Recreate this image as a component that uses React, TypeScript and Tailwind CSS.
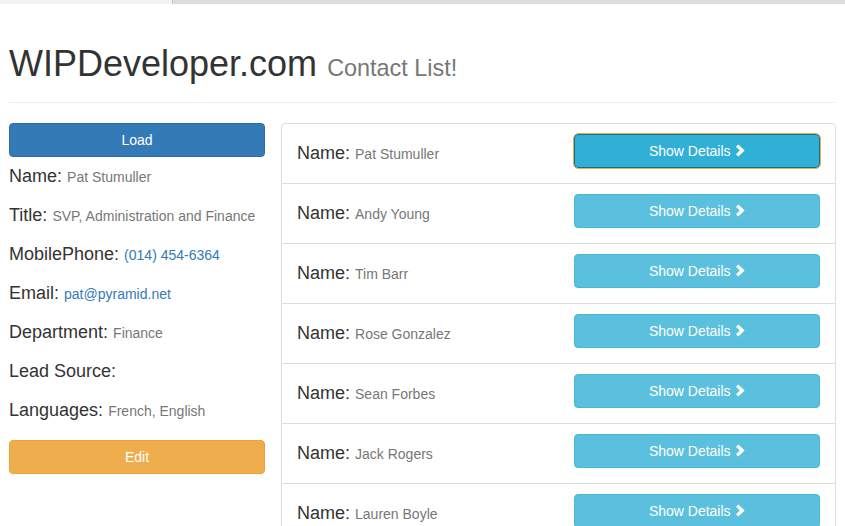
import React from "react";

const contacts = [
  "Pat Stumuller",
  "Andy Young",
  "Tim Barr",
  "Rose Gonzalez",
  "Sean Forbes",
  "Jack Rogers",
  "Lauren Boyle",
];

function Chevron() {
  return (
    <svg width="10" height="13" viewBox="0 0 10 13" className="inline-block ml-[4px] -mt-[3px] align-middle">
      <polyline points="2.2,1.6 7.2,6.5 2.2,11.4" fill="none" stroke="white" strokeWidth="3.4" strokeLinejoin="miter" strokeLinecap="butt" />
    </svg>
  );
}

function Field({ label, value, link }: { label: string; value?: string; link?: boolean }) {
  return (
    <div className="h-[39px] pt-[9px] leading-[20px] text-[18px] text-[#333]">
      {label}:{" "}
      {value && (
        <span className={"text-[14px] " + (link ? "text-[#337ab7]" : "text-[#777]")}>{value}</span>
      )}
    </div>
  );
}

export default function App() {
  return (
    <div className="min-h-[526px] bg-white text-[#333]" style={{ fontFamily: '"Liberation Sans", Arial, Helvetica, sans-serif' }}>
      <div className="flex h-[4px]">
        <div className="w-[173px] bg-[#f2f2f2] border-r border-[#c8c8c8]"></div>
        <div className="flex-1 bg-[#dcdcdc]"></div>
      </div>
      <div className="px-[9px]">
        <div className="mt-[40px] pb-[18px] border-b border-[#eeeeee]">
          <h1 className="h-[40px] text-[36px] leading-[40px] font-normal text-[#333] whitespace-nowrap">
            WIPDeveloper.com <small className="text-[23.4px] leading-none text-[#777]">Contact List!</small>
          </h1>
        </div>
        <div className="mt-[20px] flex gap-[16px]">
          <div className="w-[256px] shrink-0">
            <button className="w-full h-[34px] rounded-[4px] bg-[#337ab7] border border-[#2e6da4] text-white text-[14px] leading-[20px]">
              Load
            </button>
            <Field label="Name" value="Pat Stumuller" />
            <Field label="Title" value="SVP, Administration and Finance" />
            <Field label="MobilePhone" value="(014) 454-6364" link />
            <Field label="Email" value="pat@pyramid.net" link />
            <Field label="Department" value="Finance" />
            <Field label="Lead Source" />
            <Field label="Languages" value="French, English" />
            <button className="mt-[10px] w-full h-[34px] rounded-[4px] bg-[#f0ad4e] border border-[#eea236] text-white text-[14px] leading-[20px]">
              Edit
            </button>
          </div>
          <div className="flex-1 border border-[#dddddd] rounded-t-[4px] h-fit">
            {contacts.map((c, i) => (
              <div
                key={c}
                className={"h-[59px] px-[15px] pt-[10px] grid grid-cols-2 gap-x-[30px] " + (i > 0 ? "border-t border-[#dddddd] h-[60px]" : "")}
              >
                <div className="pt-[9px] text-[18px] leading-[20px] text-[#333]">
                  Name: <span className="text-[14px] text-[#777]">{c}</span>
                </div>
                <div>
                  {i === 0 ? (
                    <button className="w-full h-[34px] rounded-[4px] bg-[#31b0d5] border border-[#1b6d85] outline outline-1 outline-[#eab04e] text-white text-[14px] leading-[20px]">
                      Show Details<Chevron />
                    </button>
                  ) : (
                    <button className="w-full h-[34px] rounded-[4px] bg-[#5bc0de] border border-[#46b8da] text-white text-[14px] leading-[20px]">
                      Show Details<Chevron />
                    </button>
                  )}
                </div>
              </div>
            ))}
          </div>
        </div>
      </div>
    </div>
  );
}
